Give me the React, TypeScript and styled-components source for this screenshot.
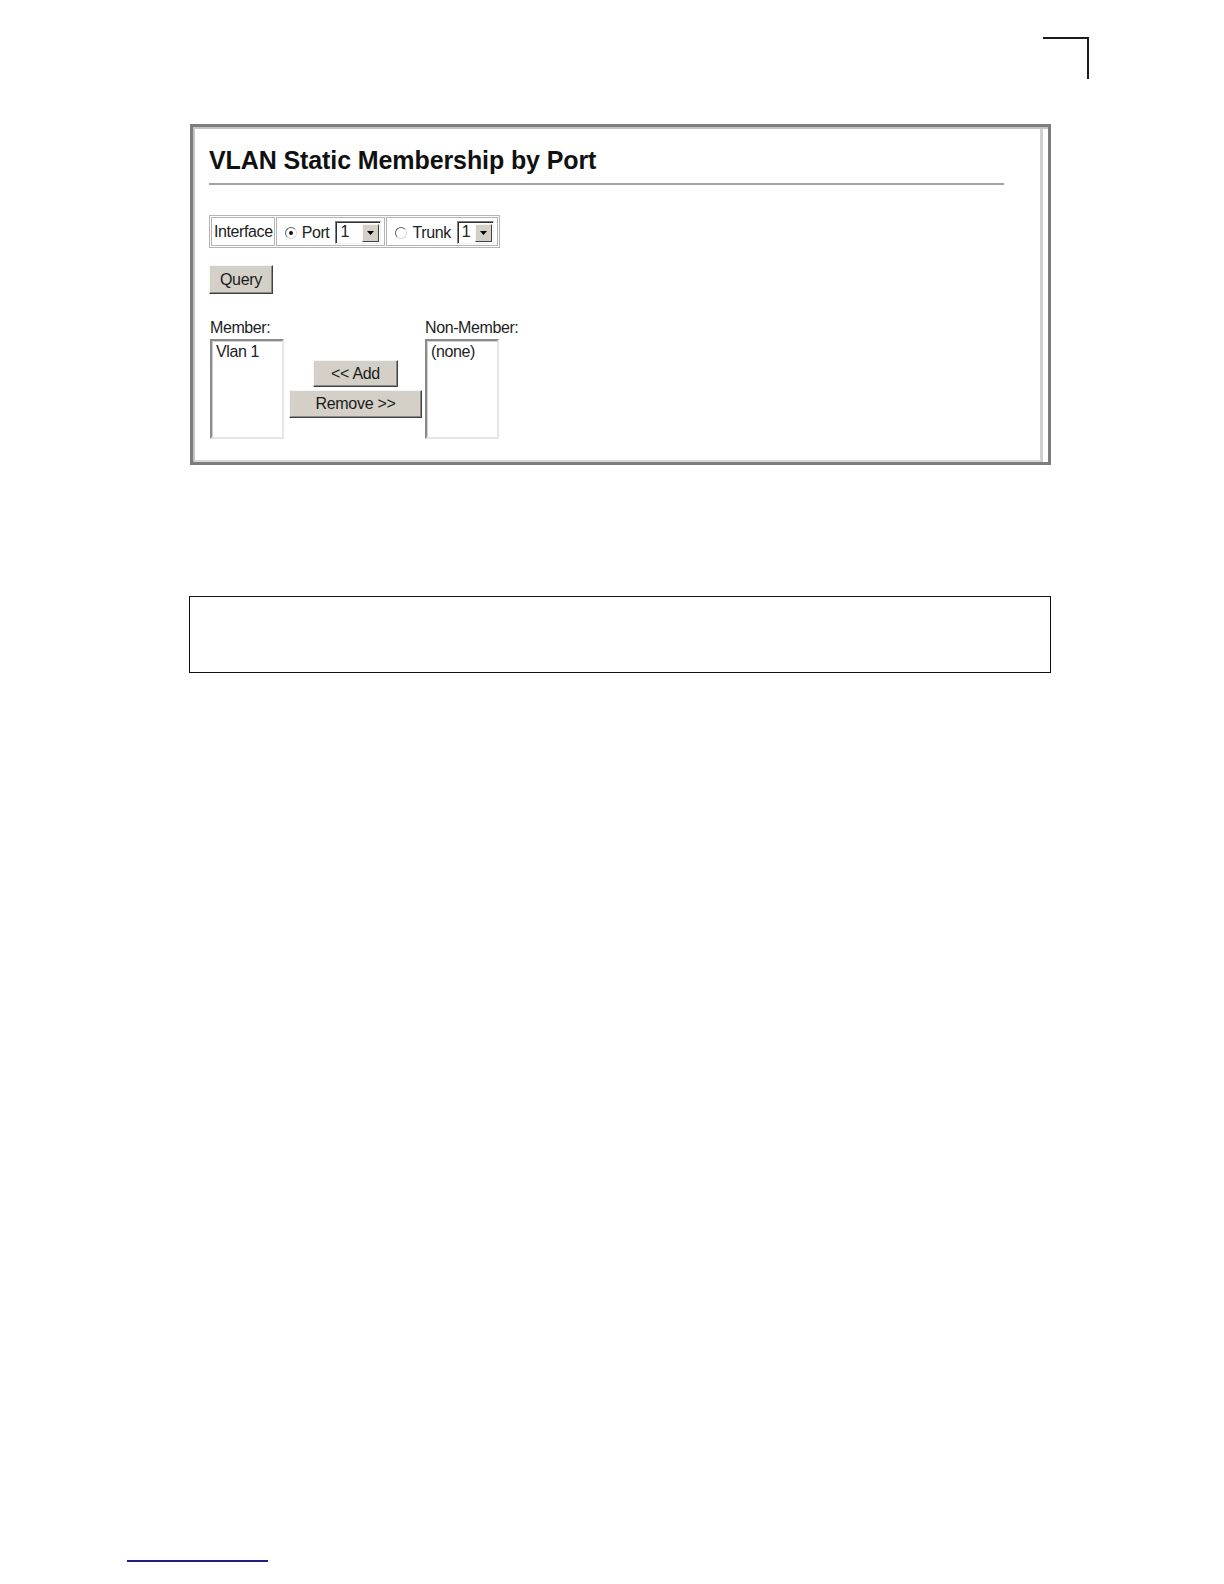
import React from 'react';
import styled, { createGlobalStyle } from 'styled-components';

const GlobalStyle = createGlobalStyle`
  html, body {
    margin: 0;
    padding: 0;
    background: #ffffff;
    overflow: hidden;
  }
  body {
    font-family: 'Liberation Sans', Arial, sans-serif;
    color: #111111;
  }
`;

export default function App() {
  return (
    <>
      <GlobalStyle />
      <StyledPage>
        <StyledCropMark />
        <StyledFrame>
          <StyledTitle>VLAN Static Membership by Port</StyledTitle>
          <StyledRule />
          <StyledInterfaceTable>
            <tbody>
              <tr>
                <StyledCell>Interface</StyledCell>
                <StyledCell>
                  <StyledRadioGroup>
                    <StyledRadio $checked />
                    <span>Port</span>
                    <Select value='1' $width={46} />
                  </StyledRadioGroup>
                </StyledCell>
                <StyledCell>
                  <StyledRadioGroup>
                    <StyledRadio $checked={false} />
                    <span>Trunk</span>
                    <Select value='1' $width={37} />
                  </StyledRadioGroup>
                </StyledCell>
              </tr>
            </tbody>
          </StyledInterfaceTable>
          <StyledQueryRow>
            <StyledButton $width={64} $height={29}>
              Query
            </StyledButton>
          </StyledQueryRow>
          <StyledMemberRow>
            <StyledListColumn $width={76}>
              <StyledLabel>Member:</StyledLabel>
              <StyledListBox>Vlan 1</StyledListBox>
            </StyledListColumn>
            <StyledMoveColumn>
              <StyledButton $width={85} $height={27}>
                &lt;&lt; Add
              </StyledButton>
              <StyledButton $width={133} $height={28}>
                Remove &gt;&gt;
              </StyledButton>
            </StyledMoveColumn>
            <StyledListColumn $width={100}>
              <StyledLabel>Non-Member:</StyledLabel>
              <StyledListBox>(none)</StyledListBox>
            </StyledListColumn>
          </StyledMemberRow>
        </StyledFrame>
        <StyledNoteBox />
        <StyledFooterRule />
      </StyledPage>
    </>
  );
}

function Select({ value, $width }: { value: string; $width: number }) {
  return (
    <StyledSelect $width={$width}>
      <StyledSelectValue>{value}</StyledSelectValue>
      <StyledSelectArrow>
        <svg width='7' height='4' viewBox='0 0 7 4'>
          <path d='M0 0h7L3.5 4z' fill='#000' />
        </svg>
      </StyledSelectArrow>
    </StyledSelect>
  );
}

const StyledPage = styled.div`
  height: 1570px;
  overflow: hidden;
`;

const StyledCropMark = styled.div`
  margin: 37px 0 0 1043px;
  width: 44px;
  height: 40px;
  border-top: 2px solid #1a1a1a;
  border-right: 2px solid #1a1a1a;
`;

const StyledFrame = styled.div`
  box-sizing: border-box;
  margin: 45px 0 0 190px;
  width: 861px;
  height: 341px;
  padding: 18px 0 0 16px;
  border: 3px solid #7d7d7d;
  background: #ffffff;
  box-shadow:
    inset 2px 2px 0 #c4c4c4,
    inset -5px 0 0 #ffffff,
    inset -8px 0 0 #cfcfcf,
    inset 0 -2px 0 #d8d8d8;
`;

const StyledTitle = styled.h1`
  margin: 0;
  font-size: 25px;
  line-height: 30px;
  font-weight: bold;
  color: #111111;
  letter-spacing: -0.1px;
`;

const StyledRule = styled.div`
  margin-top: 8px;
  width: 795px;
  height: 2px;
  background: #a3a3a3;
`;

const StyledInterfaceTable = styled.table`
  margin-top: 30px;
  border: 1px solid #b4b4b4;
  border-spacing: 1px;
  font-size: 16px;
  letter-spacing: -0.4px;
  color: #222222;
`;

const StyledCell = styled.td`
  height: 27px;
  padding: 0 1px 0 2px;
  border: 1px solid #b4b4b4;
  white-space: nowrap;
`;

const StyledRadioGroup = styled.div`
  display: flex;
  align-items: center;
  gap: 5px;
  padding: 0 2px 0 6px;

  & > span {
    margin-top: 2px;
  }
`;

const StyledRadio = styled.span<{ $checked: boolean }>`
  box-sizing: border-box;
  display: inline-flex;
  align-items: center;
  justify-content: center;
  width: 12px;
  height: 12px;
  border-radius: 50%;
  border: 1.5px solid;
  border-color: #606060 #d8d8d8 #d8d8d8 #606060;
  background: #ffffff;

  &::after {
    content: '';
    display: ${({ $checked }) => ($checked ? 'block' : 'none')};
    width: 4px;
    height: 4px;
    border-radius: 50%;
    background: #111111;
  }
`;

const StyledSelect = styled.span<{ $width: number }>`
  box-sizing: border-box;
  display: inline-flex;
  align-items: stretch;
  width: ${({ $width }) => $width}px;
  height: 23px;
  margin-left: 1px;
  border: 1px solid;
  border-color: #808080 #f0f0f0 #f0f0f0 #808080;
  box-shadow: inset 1px 1px 0 #303030;
  background: #ffffff;
`;

const StyledSelectValue = styled.span`
  flex: 1;
  padding: 1px 0 0 4px;
  line-height: 18px;
`;

const StyledSelectArrow = styled.span`
  box-sizing: border-box;
  display: flex;
  align-items: center;
  justify-content: center;
  width: 17px;
  margin: 2px 1px 1px 0;
  background: #d4d0c8;
  border: 1px solid;
  border-color: #f4f4f4 #404040 #404040 #f4f4f4;
`;

const StyledQueryRow = styled.div`
  margin-top: 17px;
`;

const StyledButton = styled.button<{ $width: number; $height: number }>`
  box-sizing: border-box;
  display: block;
  width: ${({ $width }) => $width}px;
  height: ${({ $height }) => $height}px;
  margin: 0;
  padding: 0;
  font-family: 'Liberation Sans', Arial, sans-serif;
  font-size: 16px;
  letter-spacing: -0.3px;
  color: #1a1a1a;
  background: #d4d0c8;
  border: 1px solid;
  border-color: #f4f4f4 #404040 #404040 #f4f4f4;
  box-shadow: inset -1px -1px 0 #8a8a8a;
`;

const StyledMemberRow = styled.div`
  display: flex;
  align-items: flex-start;
  margin-top: 25px;
  margin-left: 1px;
  font-size: 16px;
  letter-spacing: -0.4px;
  color: #222222;
`;

const StyledListColumn = styled.div<{ $width: number }>`
  display: flex;
  flex-direction: column;
  width: ${({ $width }) => $width}px;
`;

const StyledLabel = styled.div`
  line-height: 17px;
  white-space: nowrap;
`;

const StyledListBox = styled.div`
  box-sizing: border-box;
  width: 74px;
  height: 100px;
  margin-top: 3px;
  padding: 2px 4px;
  line-height: 17px;
  background: #ffffff;
  border: 2px solid;
  border-color: #8a8a8a #e6e6e6 #e6e6e6 #8a8a8a;
  box-shadow: inset 1px 1px 0 #d0d0d0;
`;

const StyledMoveColumn = styled.div`
  display: flex;
  flex-direction: column;
  align-items: center;
  gap: 3px;
  width: 139px;
  padding-top: 41px;
`;

const StyledNoteBox = styled.div`
  box-sizing: border-box;
  margin: 131px 0 0 189px;
  width: 862px;
  height: 77px;
  border: 1.5px solid #111111;
`;

const StyledFooterRule = styled.div`
  margin: 887px 0 0 127px;
  width: 141px;
  height: 2px;
  background: #1f1f86;
`;
